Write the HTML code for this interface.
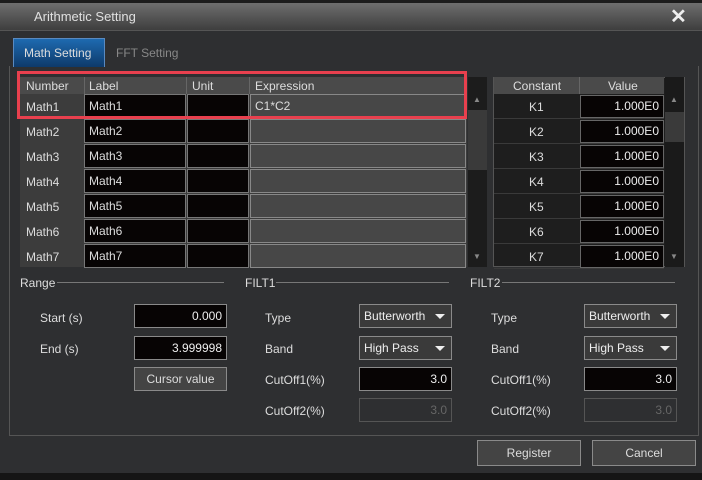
<!DOCTYPE html><html><head><style>
body{margin:0;width:702px;height:480px;background:#1c1c1c;font-family:"Liberation Sans",sans-serif;font-size:12px;color:#ddd;position:relative;overflow:hidden}
.a{position:absolute;box-sizing:border-box}
.t{white-space:nowrap}
.in{background:#070404;border:1px solid #8a8a8a;color:#eee;text-align:right;padding-right:4px;line-height:22px}
.cb{background:#3a3a3a;border:1px solid #8a8a8a;color:#eee;padding-left:4px;line-height:22px}
.cb:after{content:"";position:absolute;right:6px;top:9px;border-left:5px solid transparent;border-right:5px solid transparent;border-top:5px solid #eee}
.btn{background:#444;border:1px solid #8a8a8a;color:#ddd;text-align:center;line-height:22px}
.cell{border:1px solid #555;line-height:22px;padding-left:4px}
</style></head><body>
<div class="a" style="left:0;top:3px;width:702px;height:477px;background:#2e2f31"></div>
<div class="a" style="left:0;top:3px;width:702px;height:28px;background:linear-gradient(#6e6e6e,#3e3e3e);border-bottom:1px solid #555"></div>
<div class="a t" style="left:34px;top:9px;color:#e0e0e0;font-size:13px">Arithmetic Setting</div>
<div class="a t" style="left:670px;top:4px;font-size:20px;font-weight:bold;color:#eee">✕</div>
<div class="a" style="left:13px;top:38px;width:92px;height:29px;background:linear-gradient(#1e6ab0,#0e3a6a);border:1px solid #5a8ac0;border-bottom:none"></div>
<div class="a t" style="left:24px;top:46px;color:#ddd">Math Setting</div>
<div class="a t" style="left:116px;top:46px;color:#888">FFT Setting</div>
<div class="a" style="left:9px;top:66px;width:690px;height:370px;border:1px solid #555;border-top:none"></div>
<!-- main table -->
<div class="a" style="left:20px;top:77px;width:447px;height:190px;background:#3c3c3c"></div>
<div class="a" style="left:20px;top:77px;width:447px;height:17px;background:#4a4a4a"></div>
<div class="a t" style="left:26px;top:79px">Number</div>
<div class="a" style="left:84px;top:77px;width:1px;height:17px;background:#666"></div>
<div class="a t" style="left:89px;top:79px">Label</div>
<div class="a" style="left:186px;top:77px;width:1px;height:17px;background:#666"></div>
<div class="a t" style="left:192px;top:79px">Unit</div>
<div class="a" style="left:249px;top:77px;width:1px;height:17px;background:#666"></div>
<div class="a t" style="left:255px;top:79px">Expression</div>
<div id="rows"></div>
<div class="a" style="left:468px;top:77px;width:19px;height:190px;background:#1c1c1c"></div>
<div class="a" style="left:468px;top:110px;width:19px;height:60px;background:#3a3a3a"></div>
<div class="a t" style="left:473px;top:95px;font-size:8px;color:#888">▲</div>
<div class="a t" style="left:473px;top:252px;font-size:8px;color:#888">▼</div>
<div class="a" style="left:17px;top:71px;width:450px;height:48px;border:3px solid #e8404e"></div>
<!-- const table -->
<div class="a" style="left:493px;top:77px;width:192px;height:190px;background:#1e1e1e;border:1px solid #555"></div>
<div class="a" style="left:494px;top:77px;width:170px;height:17px;background:#4a4a4a"></div>
<div class="a t" style="left:513px;top:79px">Constant</div>
<div class="a" style="left:579px;top:77px;width:1px;height:17px;background:#666"></div>
<div class="a t" style="left:608px;top:79px">Value</div>
<div class="a" style="left:665px;top:77px;width:19px;height:190px;background:#1a1a1a"></div>
<div class="a" style="left:665px;top:112px;width:19px;height:30px;background:#3a3a3a"></div>
<div class="a t" style="left:670px;top:95px;font-size:8px;color:#888">▲</div>
<div class="a t" style="left:670px;top:252px;font-size:8px;color:#888">▼</div>
<div id="krows"></div>
<!-- sections -->
<div class="a t" style="left:20px;top:276px">Range</div><div class="a" style="left:57px;top:282px;width:167px;height:1px;background:#777"></div>
<div class="a t" style="left:245px;top:276px">FILT1</div><div class="a" style="left:276px;top:282px;width:173px;height:1px;background:#777"></div>
<div class="a t" style="left:470px;top:276px">FILT2</div><div class="a" style="left:502px;top:282px;width:173px;height:1px;background:#777"></div>
<div class="a t" style="left:40px;top:311px">Start (s)</div><div class="a in" style="left:134px;top:304px;width:93px;height:24px">0.000</div>
<div class="a t" style="left:40px;top:342px">End (s)</div><div class="a in" style="left:134px;top:336px;width:93px;height:24px">3.999998</div>
<div class="a btn" style="left:134px;top:367px;width:93px;height:24px">Cursor value</div>
<div class="a t" style="left:265px;top:311px">Type</div><div class="a cb" style="left:359px;top:304px;width:93px;height:24px">Butterworth</div>
<div class="a t" style="left:265px;top:342px">Band</div><div class="a cb" style="left:359px;top:336px;width:93px;height:24px">High Pass</div>
<div class="a t" style="left:265px;top:373px">CutOff1(%)</div><div class="a in" style="left:359px;top:367px;width:93px;height:24px">3.0</div>
<div class="a t" style="left:265px;top:404px">CutOff2(%)</div><div class="a in" style="left:359px;top:398px;width:93px;height:24px;background:#2e2f31;border-color:#555;color:#666">3.0</div>
<div class="a t" style="left:491px;top:311px">Type</div><div class="a cb" style="left:584px;top:304px;width:93px;height:24px">Butterworth</div>
<div class="a t" style="left:491px;top:342px">Band</div><div class="a cb" style="left:584px;top:336px;width:93px;height:24px">High Pass</div>
<div class="a t" style="left:491px;top:373px">CutOff1(%)</div><div class="a in" style="left:584px;top:367px;width:93px;height:24px">3.0</div>
<div class="a t" style="left:491px;top:404px">CutOff2(%)</div><div class="a in" style="left:584px;top:398px;width:93px;height:24px;background:#2e2f31;border-color:#555;color:#666">3.0</div>
<div class="a btn" style="left:477px;top:440px;width:104px;height:26px;line-height:24px">Register</div>
<div class="a btn" style="left:592px;top:440px;width:104px;height:26px;line-height:24px">Cancel</div>
<div class="a" style="left:0;top:473px;width:702px;height:7px;background:#151515"></div>
<script>
var h='',k='';
for(var i=0;i<7;i++){var y=94+i*25;
h+='<div class="a t" style="left:26px;top:'+(y+6)+'px">Math'+(i+1)+'</div>';
h+='<div class="a cell" style="left:84px;top:'+y+'px;width:102px;height:24px;background:#070404;border-color:#777">Math'+(i+1)+'</div>';
h+='<div class="a cell" style="left:187px;top:'+y+'px;width:62px;height:24px;background:#070404;border-color:#777"></div>';
h+='<div class="a cell" style="left:250px;top:'+y+'px;width:216px;height:24px;background:#474747;border-color:#888">'+(i==0?'C1*C2':'')+'</div>';
k+='<div class="a" style="left:494px;top:'+(y+24)+'px;width:170px;height:1px;background:#3a3a3a"></div>';
k+='<div class="a t" style="left:529px;top:'+(y+6)+'px">K'+(i+1)+'</div>';
k+='<div class="a in" style="left:580px;top:'+(y+1)+'px;width:84px;height:23px;line-height:21px;border-color:#666">1.000E0</div>';}
document.getElementById('rows').innerHTML=h;document.getElementById('krows').innerHTML=k;
</script>
</body></html>
